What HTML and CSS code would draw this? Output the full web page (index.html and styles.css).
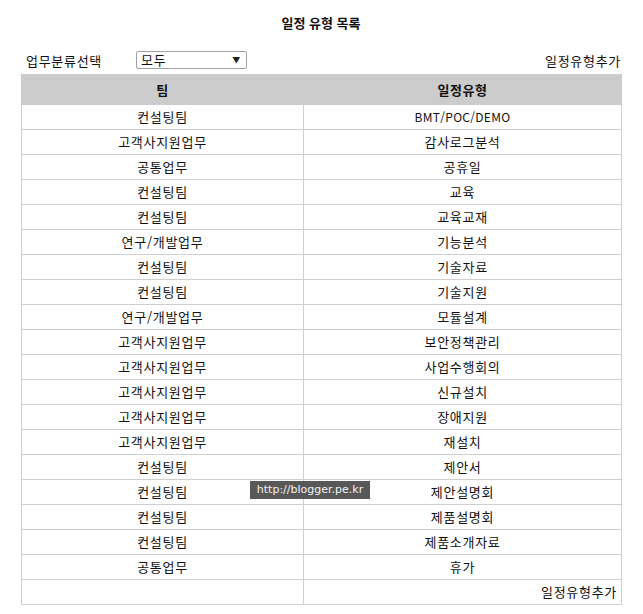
FILE: index.html
```html
<!DOCTYPE html>
<html lang="ko">
<head>
<meta charset="utf-8">
<link rel="stylesheet" href="styles.css">
</head>
<body>
<div class="page">
  <h1 class="title">일정 유형 목록</h1>
  <div class="toolbar">
    <div class="filter">
      <span class="label">업무분류선택</span>
      <div class="select"><span>모두</span><span class="arrow">▼</span></div>
    </div>
    <a class="add">일정유형추가</a>
  </div>
  <div class="table-wrap">
    <table class="list">
      <thead>
        <tr><th>팀</th><th>일정유형</th></tr>
      </thead>
      <tbody>
        <tr><td>컨설팅팀</td><td class="latin">BMT/POC/DEMO</td></tr>
        <tr><td>고객사지원업무</td><td>감사로그분석</td></tr>
        <tr><td>공통업무</td><td>공휴일</td></tr>
        <tr><td>컨설팅팀</td><td>교육</td></tr>
        <tr><td>컨설팅팀</td><td>교육교재</td></tr>
        <tr><td>연구/개발업무</td><td>기능분석</td></tr>
        <tr><td>컨설팅팀</td><td>기술자료</td></tr>
        <tr><td>컨설팅팀</td><td>기술지원</td></tr>
        <tr><td>연구/개발업무</td><td>모듈설계</td></tr>
        <tr><td>고객사지원업무</td><td>보안정책관리</td></tr>
        <tr><td>고객사지원업무</td><td>사업수행회의</td></tr>
        <tr><td>고객사지원업무</td><td>신규설치</td></tr>
        <tr><td>고객사지원업무</td><td>장애지원</td></tr>
        <tr><td>고객사지원업무</td><td>재설치</td></tr>
        <tr><td>컨설팅팀</td><td>제안서</td></tr>
        <tr><td>컨설팅팀</td><td>제안설명회</td></tr>
        <tr><td>컨설팅팀</td><td>제품설명회</td></tr>
        <tr><td>컨설팅팀</td><td>제품소개자료</td></tr>
        <tr><td>공통업무</td><td>휴가</td></tr>
        <tr><td></td><td class="right">일정유형추가</td></tr>
      </tbody>
    </table>
    <div class="watermark">http://blogger.pe.kr</div>
  </div>
</div>
</body>
</html>
```

FILE: styles.css
```css
html, body {
  margin: 0;
  padding: 0;
  background: #ffffff;
}
body {
  font-family: "Noto Sans CJK KR", "Liberation Sans", sans-serif;
  font-size: 13px;
  letter-spacing: 0.7px;
  color: #111;
}
.page {
  padding: 0 22px 0 21px;
}
.title {
  margin: 0;
  padding-top: 13px;
  height: 20px;
  font-size: 13px;
  font-weight: bold;
  letter-spacing: 0;
  text-align: center;
  line-height: 20px;
}
.toolbar {
  display: flex;
  justify-content: space-between;
  align-items: center;
  margin-top: 17px;
  height: 20px;
  padding-left: 5px;
}
.filter {
  display: flex;
  align-items: center;
}
.label {
  width: 110px;
}
.select {
  box-sizing: border-box;
  width: 111px;
  height: 18px;
  border: 1px solid #a0a0a0;
  border-radius: 2px;
  display: flex;
  justify-content: space-between;
  align-items: center;
  padding: 0 5px 0 4px;
  line-height: 16px;
}
.arrow {
  font-size: 8px;
  color: #222;
}
.add {
  color: #111;
  margin-right: 0;
}
.table-wrap {
  position: relative;
  margin-top: 4px;
}
.list {
  width: 601px;
  border-collapse: collapse;
  table-layout: fixed;
}
.list th {
  background: #cccccc;
  height: 29px;
  padding: 0;
  font-weight: bold;
  letter-spacing: 0.5px;
  border: 1px solid #cccccc;
}
.list th:first-child, .list td:first-child {
  width: 281px;
}
.list td {
  height: 24px;
  padding: 0;
  text-align: center;
  border: 1px solid #cfcfcf;
  line-height: 16px;
}
.list td.latin {
  font-size: 12px;
  letter-spacing: 0.3px;
}
.list td.right {
  text-align: right;
  padding-right: 4px;
}
.watermark {
  position: absolute;
  left: 229px;
  top: 407px;
  width: 120px;
  height: 18px;
  line-height: 18px;
  background: rgba(70, 70, 70, 0.9);
  color: #f2f2f2;
  font-family: "DejaVu Sans", sans-serif;
  font-size: 11px;
  letter-spacing: 0;
  text-align: center;
}
```
